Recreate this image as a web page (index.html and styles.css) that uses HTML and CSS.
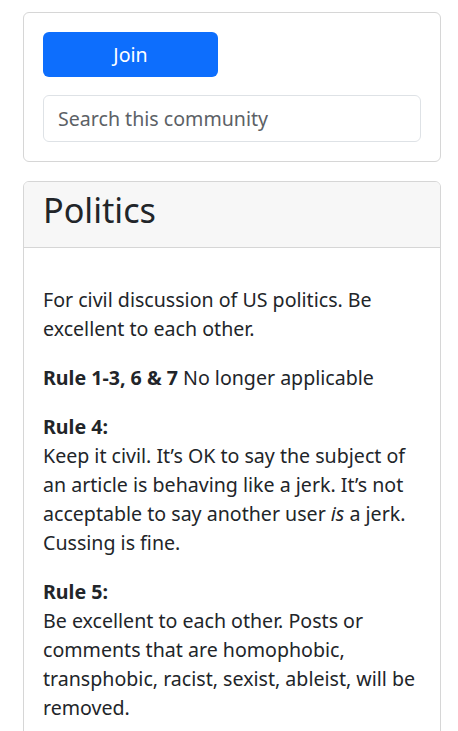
FILE: index.html
```html
<!DOCTYPE html>
<html lang="en">
<head>
<meta charset="utf-8">
<title>Politics</title>
<link rel="stylesheet" href="styles.css">
</head>
<body>
<div class="sidebar">
  <div class="card">
    <div class="card-body actions">
      <button class="btn-join" type="button">Join</button>
      <input class="search" type="text" placeholder="Search this community">
    </div>
  </div>
  <div class="card">
    <div class="card-header">
      <h3 class="title">Politics</h3>
    </div>
    <div class="card-body about">
      <p>For civil discussion of US politics. Be excellent to each other.</p>
      <p><strong>Rule 1-3, 6 &amp; 7</strong> No longer applicable</p>
      <p><strong>Rule 4:</strong><br>Keep it civil. It’s OK to say the subject of an article is behaving like a jerk. It’s not acceptable to say another user <em>is</em> a jerk. Cussing is fine.</p>
      <p><strong>Rule 5:</strong><br>Be excellent to each other. Posts or comments that are homophobic, transphobic, racist, sexist, ableist, will be removed.</p>
    </div>
  </div>
</div>
</body>
</html>
```

FILE: styles.css
```css
* { box-sizing: border-box; }
html, body { margin: 0; padding: 0; background: #fff; }
body {
  font-family: "Noto Sans", "Open Sans", sans-serif;
  font-size: 19.6px;
  line-height: 29px;
  color: #222529;
  overflow: hidden;
}
.sidebar {
  padding: 12px 17px 0 23px;
  display: flex;
  flex-direction: column;
  gap: 19px;
}
.card {
  border: 1px solid #d6d6d6;
  border-radius: 6px;
  background: #fff;
  overflow: hidden;
}
.card-body { padding: 19px; }
.actions {
  display: flex;
  flex-direction: column;
  align-items: flex-start;
  gap: 18px;
}
.btn-join {
  width: 175px;
  height: 45px;
  border: 0;
  border-radius: 6px;
  background: #0d6efd;
  color: #fff;
  font-family: inherit;
  font-size: 19.6px;
  line-height: 29px;
  padding: 8px 12px;
}
.search {
  width: 100%;
  height: 47px;
  border: 1px solid #dee2e6;
  border-radius: 6px;
  padding: 8px 14px;
  font-family: inherit;
  font-size: 19.6px;
  line-height: 29px;
  color: #222529;
  background: #fff;
}
.search::placeholder { color: #5c6166; opacity: 1; }
.card-header {
  background: #f7f7f7;
  border-bottom: 1px solid #d6d6d6;
  padding: 8px 19px 9px;
}
.title {
  margin: 0 0 8px;
  font-size: 34.2px;
  line-height: 40px;
  font-weight: 400;
  color: #222529;
}
.about { padding-top: 37px; padding-bottom: 0; }
.about p { margin: 0 0 20px; }
.about strong { font-weight: 700; }
```
